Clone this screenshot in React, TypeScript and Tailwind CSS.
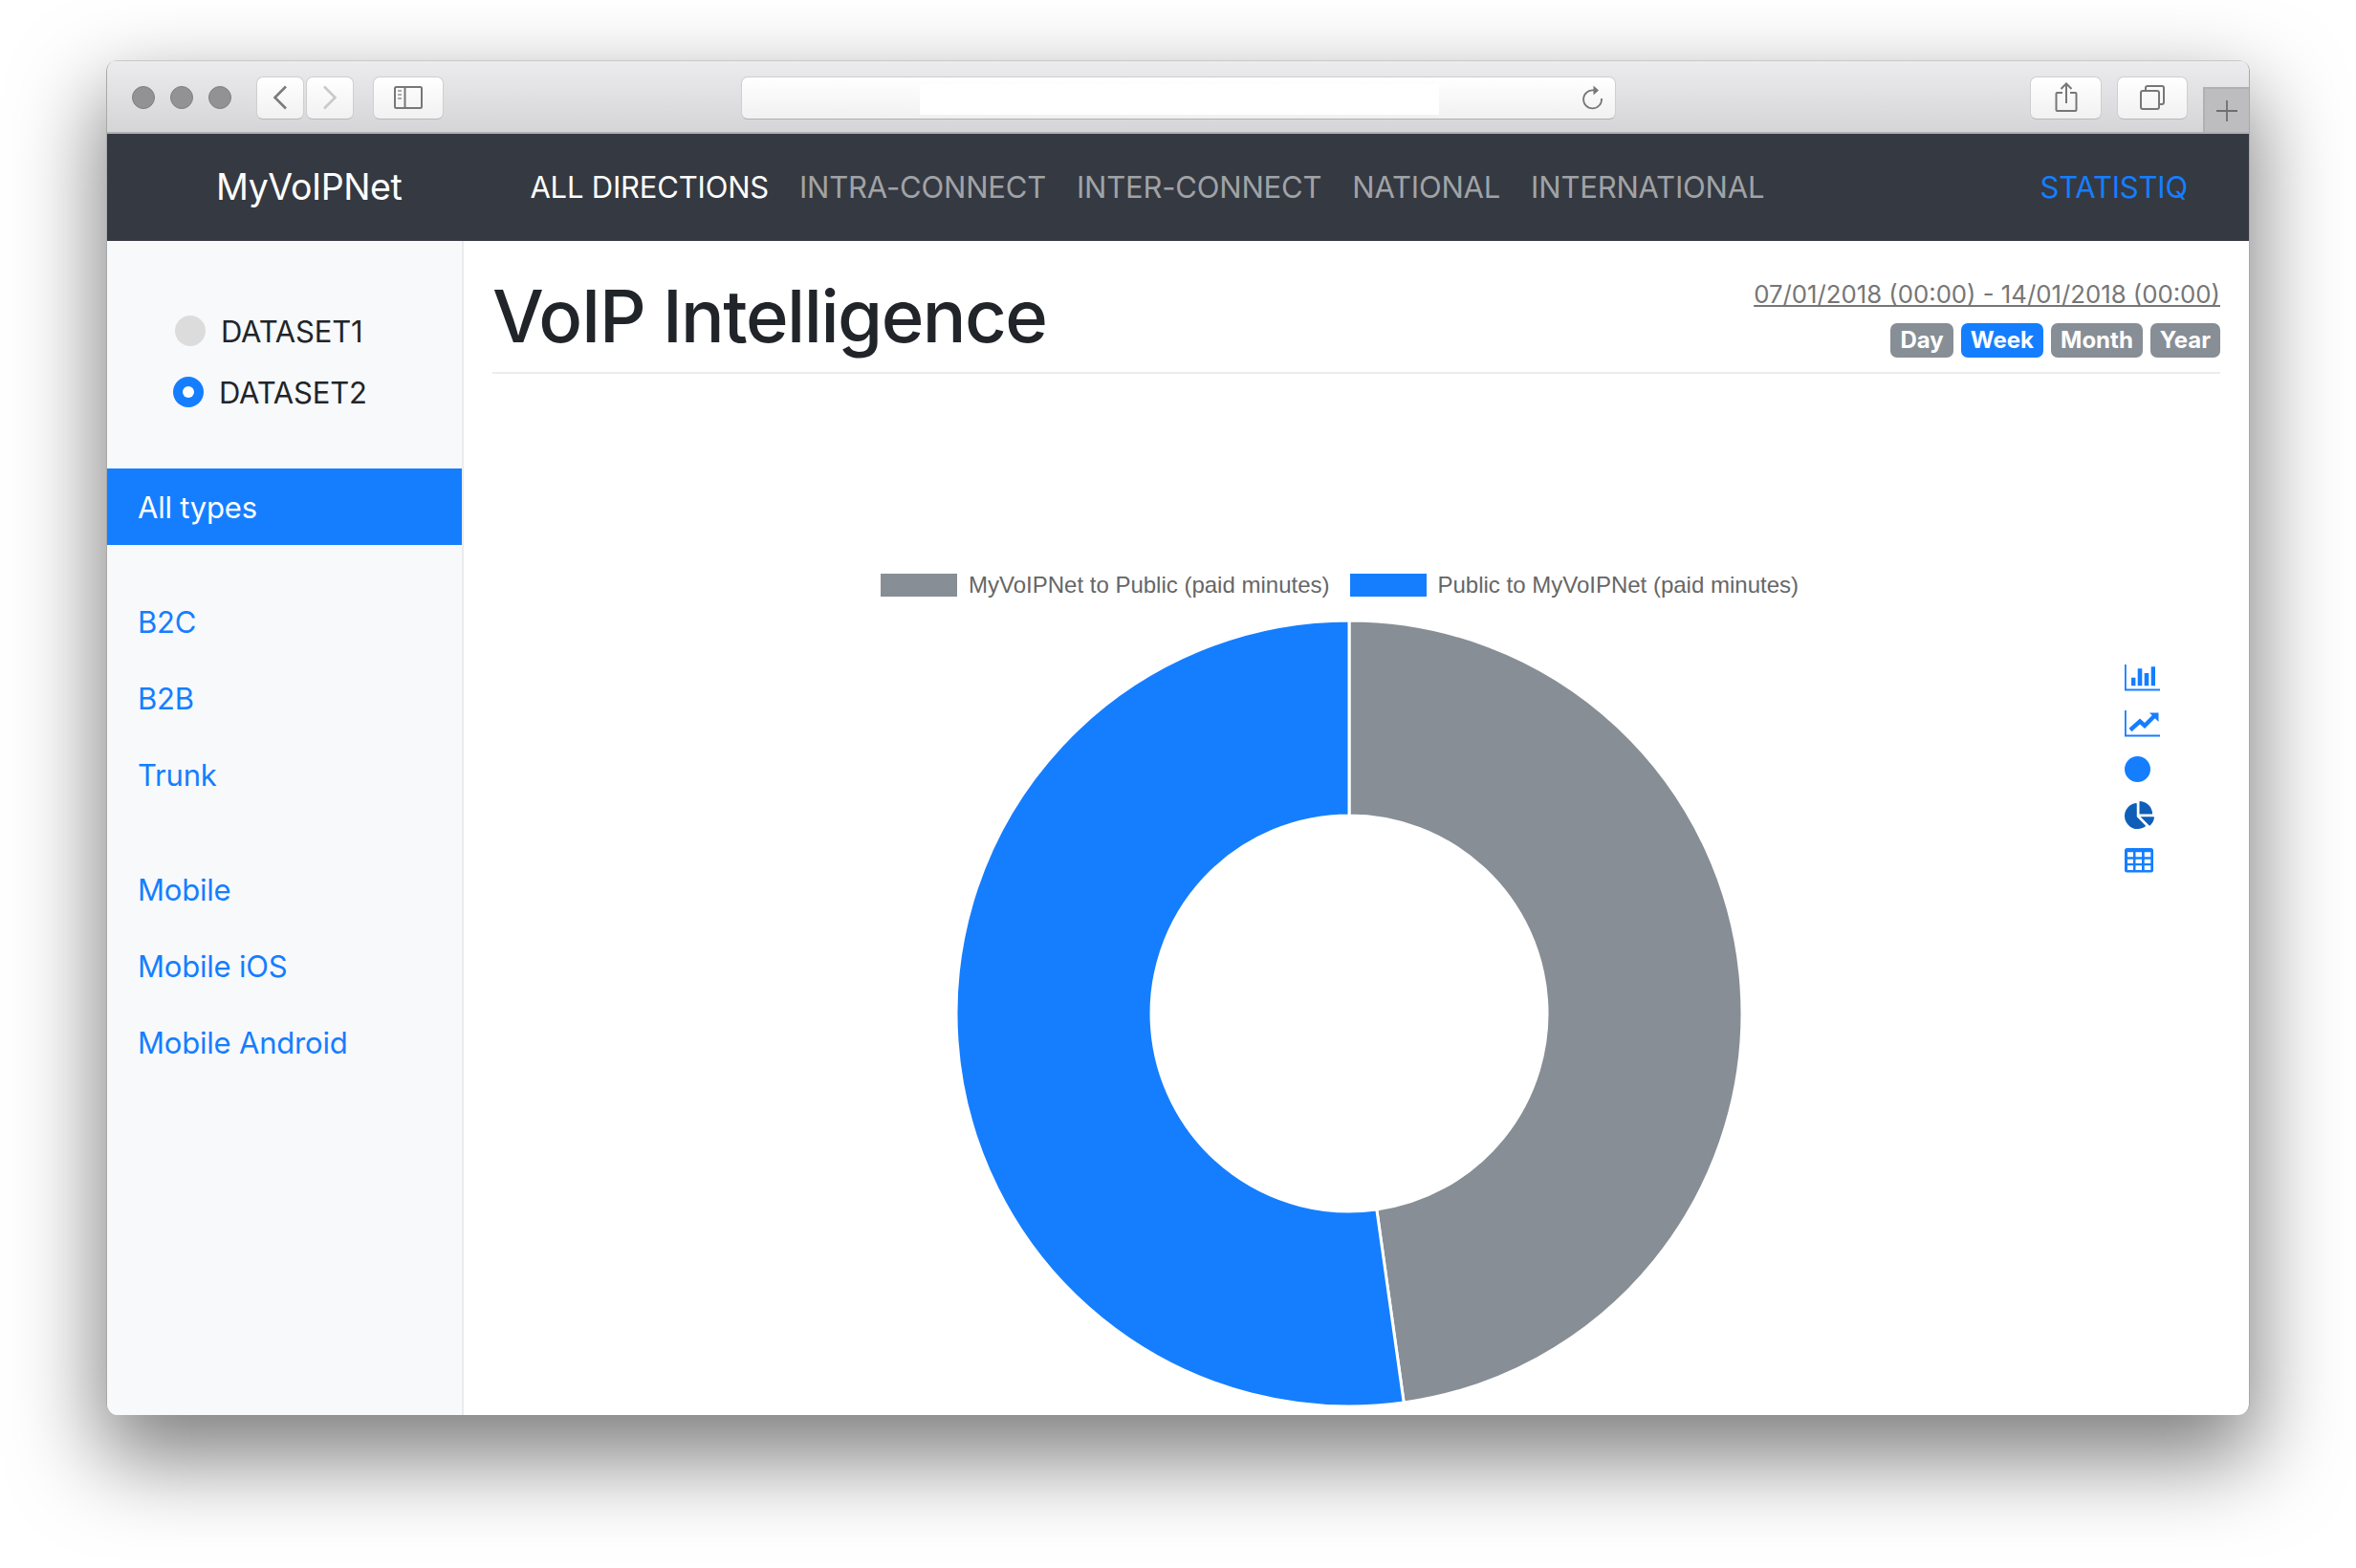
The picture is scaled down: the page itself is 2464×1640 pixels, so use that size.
import { FaChartPie } from "react-icons/fa";

const navLinks = ["INTRA-CONNECT", "INTER-CONNECT", "NATIONAL", "INTERNATIONAL"];
const ranges = ["Day", "Week", "Month", "Year"];

// Donut drawn clockwise from 12 o'clock
const CX = 412;
const CY = 412;
const R = 411;
const r = 207;

function polar(radius: number, deg: number) {
  const a = ((deg - 90) * Math.PI) / 180;
  return `${(CX + radius * Math.cos(a)).toFixed(2)} ${(CY + radius * Math.sin(a)).toFixed(2)}`;
}

function arc(from: number, to: number) {
  const big = to - from > 180 ? 1 : 0;
  return `M${polar(R, from)} A${R} ${R} 0 ${big} 1 ${polar(R, to)} L${polar(r, to)} A${r} ${r} 0 ${big} 0 ${polar(r, from)} Z`;
}

function ToolbarButton({ className, children }: { className: string; children: React.ReactNode }) {
  return (
    <div className={`flex h-[45px] items-center justify-center rounded-[7px] border border-[#cfced0] border-b-[#b9b8ba] bg-gradient-to-b from-white to-[#f1f1f1] ${className}`}>
      {children}
    </div>
  );
}

function Toolbar() {
  return (
    <div className="flex h-[77px] shrink-0 items-center border-b-2 border-[#b0afb1] border-t border-t-[#c9c8ca] bg-gradient-to-b from-[#ecebed] to-[#d5d4d6] pl-[26px] pt-[2px]">
      <div className="flex gap-4">
        {[0, 1, 2].map((i) => (
          <span key={i} className="h-6 w-6 rounded-full border border-[#7f7e80] bg-[#929193]" />
        ))}
      </div>
      <ToolbarButton className="ml-[26px] w-[50px]">
        <svg width="16" height="26" viewBox="0 0 16 26" fill="none" stroke="#7b7b7b" strokeWidth="2.6"><path d="M14 1.5 2.5 13 14 24.5" /></svg>
      </ToolbarButton>
      <ToolbarButton className="ml-[2px] w-[50px]">
        <svg width="16" height="26" viewBox="0 0 16 26" fill="none" stroke="#c9c9c9" strokeWidth="2.6"><path d="M2 1.5 13.5 13 2 24.5" /></svg>
      </ToolbarButton>
      <ToolbarButton className="ml-5 w-[74px]">
        <svg width="30" height="24" viewBox="0 0 30 24" fill="none" stroke="#777" strokeWidth="2">
          <rect x="1" y="1" width="28" height="22" rx="1.5" />
          <path d="M11.5 1v22" />
          <path d="M4 5h4M4 9h4M4 13h4" stroke="#aaa" />
        </svg>
      </ToolbarButton>
      <div className="relative ml-[311px] flex h-[45px] w-[916px] items-center justify-end rounded-[7px] border border-[#cfced0] border-b-[#b0afb1] bg-gradient-to-b from-white to-[#f1f1f1] pr-[11px]">
        <div className="absolute left-[186px] top-[7px] h-8 w-[543px] bg-white" />
        <svg width="24" height="28" viewBox="0 0 24 28" fill="none" stroke="#777" strokeWidth="1.8">
          <path d="M13 6.500A9.500 9.500 0 1 0 21 15" />
          <path d="M12.500 1.500 18 6.500 12.500 11.500Z" fill="#777" stroke="none" />
        </svg>
      </div>
      <ToolbarButton className="ml-[433px] w-[75px]">
        <svg width="24" height="32" viewBox="0 0 24 32" fill="none" stroke="#777" strokeWidth="2">
          <path d="M8 11H2.500A1 1 0 0 0 1.500 12v17a1 1 0 0 0 1 1h19a1 1 0 0 0 1-1V12a1 1 0 0 0-1-1H16" />
          <path d="M12 22V2M6.500 7 12 1.500 17.500 7" />
        </svg>
      </ToolbarButton>
      <ToolbarButton className="ml-4 w-[74px]">
        <svg width="26" height="26" viewBox="0 0 26 26" fill="none" stroke="#777" strokeWidth="2">
          <rect x="1" y="6" width="19" height="19" rx="2" />
          <path d="M6 6V3a2 2 0 0 1 2-2h15a2 2 0 0 1 2 2v15a2 2 0 0 1-2 2h-3" />
        </svg>
      </ToolbarButton>
      <div className="ml-4 flex h-[47px] w-12 items-center justify-center self-end border-l-2 border-t-2 border-[#b0afb1] bg-[#bdbcbe]">
        <svg width="24" height="24" viewBox="0 0 24 24" stroke="#6f6f6f" strokeWidth="1.8"><path d="M12 1v22M1 12h22" /></svg>
      </div>
    </div>
  );
}

function Navbar() {
  return (
    <nav className="flex h-[112px] shrink-0 items-center bg-[#353941] pl-[114px] pr-[64px] pt-[1px] text-[31px] tracking-[-0.2px]">
      <span className="mr-[134px] text-[37.5px] text-white tracking-[-0.4px]">MyVoIPNet</span>
      <span className="text-white">ALL DIRECTIONS</span>
      {navLinks.map((l) => (
        <span key={l} className="ml-8 text-[#a0a3a6]">{l}</span>
      ))}
      <span className="ml-auto text-[#157eff]">STATISTIQ</span>
    </nav>
  );
}

function Sidebar() {
  const Item = ({ label }: { label: string }) => (
    <div className="flex h-20 items-center pl-[32px] text-[#157eff]">{label}</div>
  );
  return (
    <aside className="w-[373px] shrink-0 border-r-2 border-[#eaebed] bg-[#f8f9fb] text-[31px] tracking-[-0.2px]">
      <div className="flex h-[238px] flex-col gap-[32px] pt-[78px] text-[#212529]">
        <div className="flex items-center gap-4 pl-[71px] leading-8">
          <span className="h-8 w-8 rounded-full bg-[#dcdcdc]" />
          <span className="translate-y-px">DATASET1</span>
        </div>
        <div className="flex items-center gap-4 pl-[69px] leading-8">
          <span className="flex h-8 w-8 items-center justify-center rounded-full bg-[#157eff]">
            <span className="h-3 w-3 rounded-full bg-white" />
          </span>
          <span className="translate-y-px">DATASET2</span>
        </div>
      </div>
      <div className="flex h-20 items-center bg-[#157eff] pl-[32px] pt-[2px] text-white">All types</div>
      <div className="mt-[41px]">
        {["B2C", "B2B", "Trunk"].map((l) => <Item key={l} label={l} />)}
      </div>
      <div className="mt-10">
        {["Mobile", "Mobile iOS", "Mobile Android"].map((l) => <Item key={l} label={l} />)}
      </div>
    </aside>
  );
}

function ChartSwitcher() {
  return (
    <div className="absolute left-[1707px] top-[294px] flex flex-col text-[#157eff]">
      <div className="flex h-12 items-center">
        <svg width="37" height="28" viewBox="0 0 37 28" fill="currentColor">
          <path d="M0 0h1.800v25.500H37V27.500H0Z" />
          <path d="M7 13.700h4.400v8.600H7ZM13.700 4.300h4.600v18h-4.600ZM20.700 9h4.600v13.300h-4.600ZM27.700 2.300H32v20h-4.300Z" />
        </svg>
      </div>
      <div className="flex h-12 items-center">
        <svg width="37" height="28" viewBox="0 0 37 28" fill="currentColor">
          <path d="M0 0h1.800v25.500H37V27.500H0Z" />
          <path d="M6 20.500 16 11.500 21 16 31 6" fill="none" stroke="currentColor" strokeWidth="4.400" />
          <path d="M26 2.500h9.500V12Z" />
        </svg>
      </div>
      <div className="flex h-[47px] items-center">
        <span className="h-[27px] w-[27px] rounded-full bg-[#157eff]" />
      </div>
      <div className="flex h-12 items-center text-[#0f5fb8]">
        <FaChartPie className="h-[31px] w-[31px]" />
      </div>
      <div className="flex h-12 items-center">
        <svg width="30" height="26" viewBox="0 0 30 26">
          <rect width="30" height="25.500" rx="2.500" fill="currentColor" />
          <path fill="#fff" d="M3 4.300h6v5H3ZM11.500 4.300H18v5h-6.500ZM20.700 4.300h6.600v5h-6.600ZM3 11.700h6V16H3ZM11.500 11.700H18V16h-6.500ZM20.700 11.700h6.600V16h-6.600ZM3 18.300h6V23H3ZM11.500 18.300H18V23h-6.500ZM20.700 18.300h6.600V23h-6.600Z" />
        </svg>
      </div>
    </div>
  );
}

export default function App() {
  return (
    <div className="h-[1640px] w-[2464px] overflow-hidden bg-white pl-[111px] pt-[63px] font-[Inter,sans-serif]">
      <div className="flex h-[1417px] w-[2242px] flex-col overflow-hidden rounded-[12px] border-x border-[#a9a9a9] bg-white shadow-[0_40px_90px_6px_rgba(0,0,0,0.5)]">
        <Toolbar />
        <Navbar />
        <div className="flex min-h-0 flex-1">
          <Sidebar />
          <main className="min-w-0 flex-1 pl-[30px] pr-[30px]">
            <header className="flex h-[139px] items-start justify-between border-b-2 border-[#ececec]">
              <h1 className="mt-[30px] text-[76px] font-medium leading-[96px] tracking-[-1.5px] text-[#212529]">VoIP Intelligence</h1>
              <div className="mt-[40px] flex flex-col items-end">
                <span className="text-[25.75px] leading-[32px] text-[#767676] underline">07/01/2018 (00:00) - 14/01/2018 (00:00)</span>
                <div className="mt-[14px] flex gap-2">
                  {ranges.map((l) => (
                    <span key={l} className={`flex h-9 items-center rounded-[7px] px-[10px] text-[24px] font-bold text-white ${l === "Week" ? "bg-[#157eff]" : "bg-[#878e95]"}`}>{l}</span>
                  ))}
                </div>
              </div>
            </header>
            <div className="relative w-[1792px]">
              <ChartSwitcher />
              <div className="flex items-center justify-center pr-[20px] pt-[209px] font-['Liberation_Sans',sans-serif] text-[24px] leading-6 text-[#666]">
                <span className="mr-3 h-6 w-20 bg-[#878e95]" />
                <span className="mr-[21px]">MyVoIPNet to Public (paid minutes)</span>
                <span className="mr-3 h-6 w-20 bg-[#157eff]" />
                <span>Public to MyVoIPNet (paid minutes)</span>
              </div>
              <svg width="824" height="824" viewBox="0 0 824 824" className="mx-auto mt-[24px] block">
                <path d={arc(0, 172)} fill="#878e95" stroke="#fff" strokeWidth="3" />
                <path d={arc(172, 360)} fill="#157eff" stroke="#fff" strokeWidth="3" />
              </svg>
            </div>
          </main>
        </div>
      </div>
    </div>
  );
}
